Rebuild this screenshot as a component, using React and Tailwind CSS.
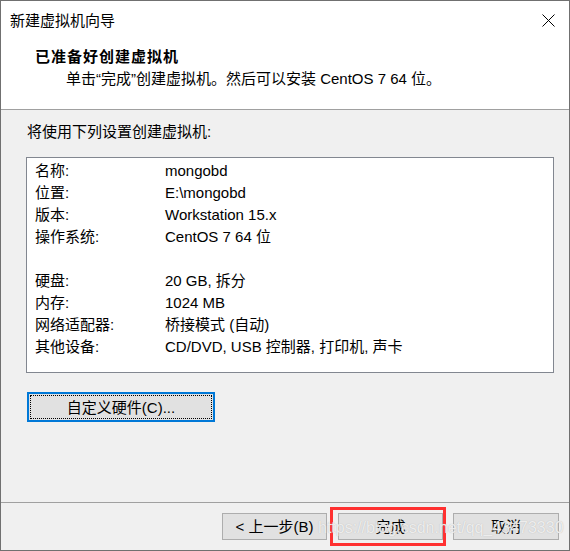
const rows = [
  ['名称:', 'mongobd'],
  ['位置:', 'E:\\mongobd'],
  ['版本:', 'Workstation 15.x'],
  ['操作系统:', 'CentOS 7 64 位'],
  ['', ''],
  ['硬盘:', '20 GB, 拆分'],
  ['内存:', '1024 MB'],
  ['网络适配器:', '桥接模式 (自动)'],
  ['其他设备:', 'CD/DVD, USB 控制器, 打印机, 声卡'],
];

function CloseIcon() {
  return (
    <svg width="13" height="13" viewBox="0 0 13 13" className="text-black">
      <path d="M0.5 0.5L12.5 12.5M12.5 0.5L0.5 12.5" stroke="currentColor" strokeWidth="1" />
    </svg>
  );
}

function WinButton({ children, className = '' }) {
  return (
    <button className={`h-[27px] border border-[#adadad] bg-[#e1e1e1] text-[15px] leading-none text-black flex items-center justify-center ${className}`}>
      {children}
    </button>
  );
}

export default function App() {
  return (
    <div className="relative w-[570px] h-[551px] border border-[#707070] bg-[#f0f0f0] flex flex-col text-[15px] text-black font-['Liberation_Sans','Noto_Sans_CJK_SC',sans-serif]">
      {/* title bar */}
      <div className="h-[39px] bg-white flex items-center justify-between pl-[9px] pr-[14px]">
        <span className="leading-[22px]">新建虚拟机向导</span>
        <CloseIcon />
      </div>

      {/* header */}
      <div className="h-[70px] bg-white border-b border-[#a0a0a0] pl-[34px] pt-[6px]">
        <p className="font-bold leading-[22px] tracking-[1px]">已准备好创建虚拟机</p>
        <p className="leading-[22px] pl-[31px]">单击“完成”创建虚拟机。然后可以安装 CentOS 7 64 位。</p>
      </div>

      {/* body */}
      <div className="flex-1 pl-[25px] pr-[15px] pt-[11px]">
        <p className="leading-[22px] pl-[1px]">将使用下列设置创建虚拟机:</p>
        <div className="mt-[14px] h-[216px] border border-[#828790] bg-white pt-[2px] pl-[8px]">
          {rows.map(([k, v], i) => (
            <div key={i} className="flex h-[22px] leading-[22px]">
              <span className="w-[130px]">{k}</span>
              <span>{v}</span>
            </div>
          ))}
        </div>
        <button className="mt-[19px] ml-[1px] w-[188px] h-[30px] border-2 border-[#0078d7] bg-[#e1e1e1] outline outline-1 outline-dotted outline-black outline-offset-[-4px] text-[15px] leading-none flex items-center justify-center">
          自定义硬件(C)...
        </button>
      </div>

      {/* footer */}
      <div className="h-[48px] border-t border-[#a0a0a0] flex justify-end pt-[10px] pr-[10px]">
        <WinButton className="w-[105px]">&lt; 上一步(B)</WinButton>
        <WinButton className="w-[105px] ml-[11px]">完成</WinButton>
        <WinButton className="w-[106px] ml-[10px]">取消</WinButton>
      </div>

      {/* annotation + watermark overlays */}
      <div className="absolute left-[329px] top-[506px] w-[116px] h-[39px] border-[3px] border-[#ff3030]" />
      <div className="absolute left-[317px] top-[516px] text-[16px] leading-[22px] text-white/75 font-['Liberation_Sans',sans-serif] [text-shadow:0_0_1px_#b0b0b0] pointer-events-none">
        https://blog.csdn.net/qq_43473330
      </div>
    </div>
  );
}
